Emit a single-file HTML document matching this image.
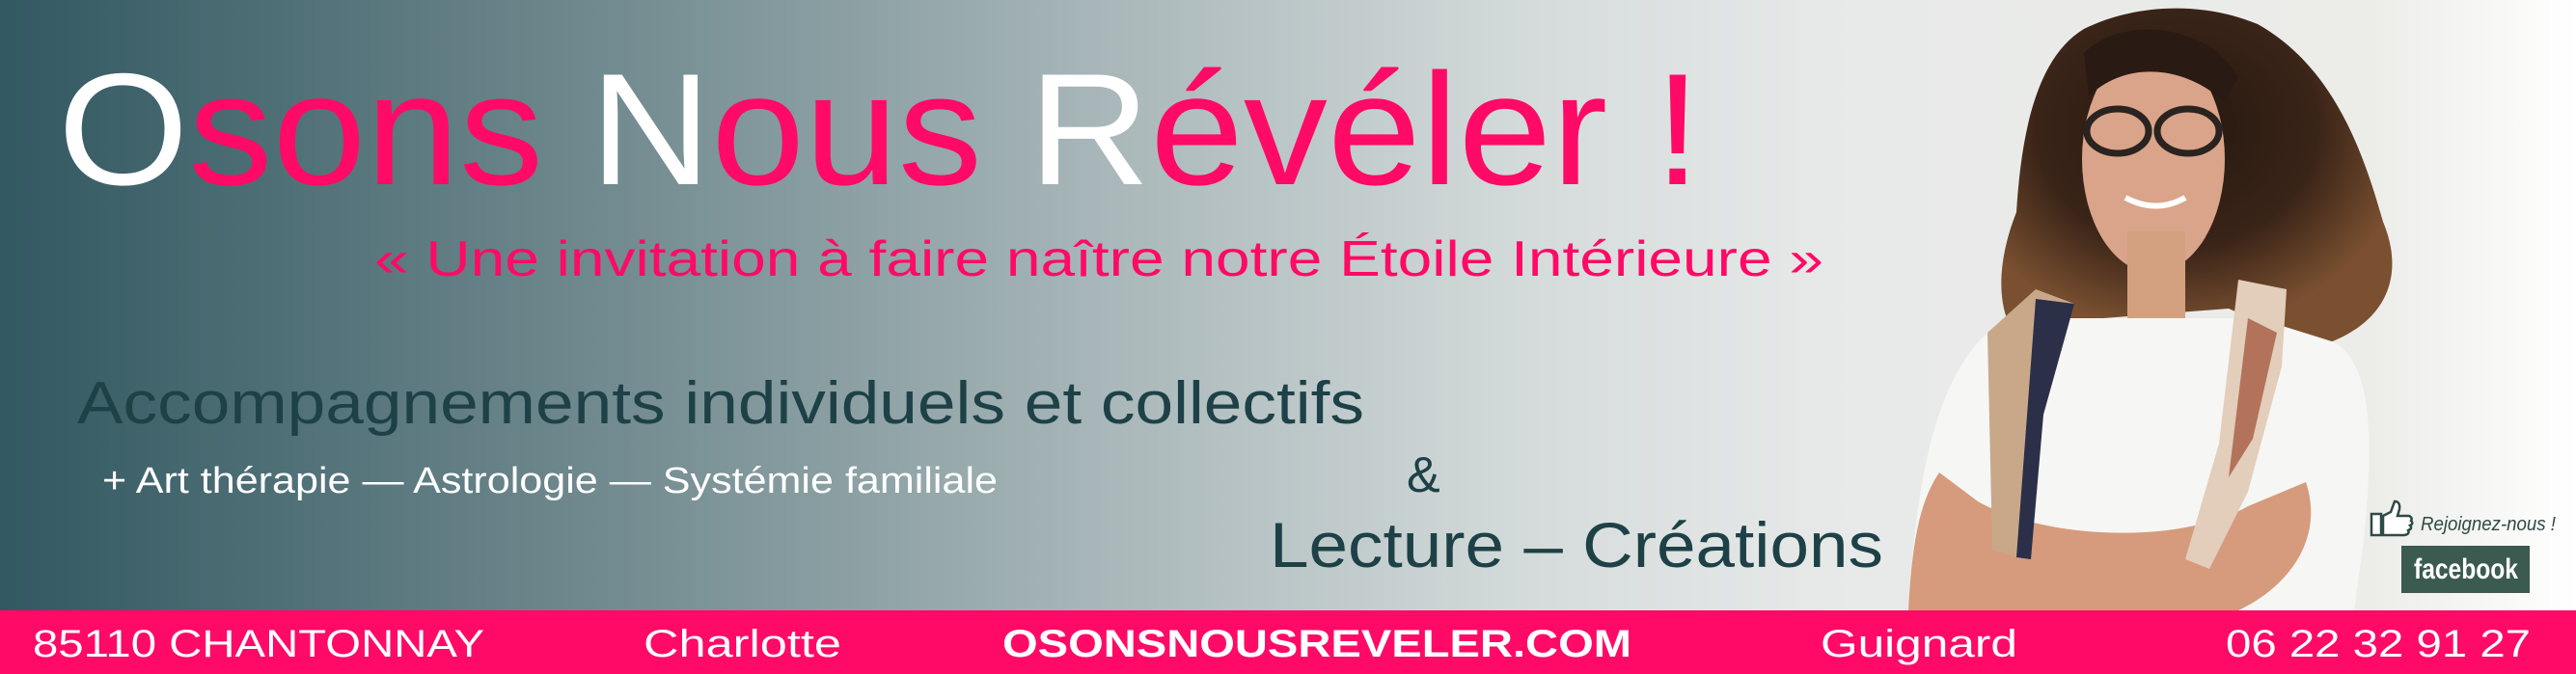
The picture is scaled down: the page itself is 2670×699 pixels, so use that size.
<!DOCTYPE html>
<html><head><meta charset="utf-8"><style>
html,body{margin:0;padding:0;width:2670px;height:699px;overflow:hidden}
svg{display:block}
text{font-family:"Liberation Sans",sans-serif}
</style></head><body>
<svg width="2670" height="699" viewBox="0 0 2670 699" xmlns="http://www.w3.org/2000/svg">
<defs>
<linearGradient id="bg" x1="0" y1="0" x2="1" y2="0">
<stop offset="0" stop-color="#325861"/>
<stop offset="0.22" stop-color="#6d878c"/>
<stop offset="0.42" stop-color="#a6b5b7"/>
<stop offset="0.6" stop-color="#d6dcdc"/>
<stop offset="0.72" stop-color="#e8eae9"/>
<stop offset="0.92" stop-color="#ecece9"/>
<stop offset="1" stop-color="#ffffff"/>
</linearGradient>
<radialGradient id="hair" cx="0.45" cy="0.35" r="0.6">
<stop offset="0" stop-color="#24170f"/>
<stop offset="0.6" stop-color="#3a2418"/>
<stop offset="1" stop-color="#7a5030"/>
</radialGradient>
</defs>
<rect width="2670" height="699" fill="url(#bg)"/>

<!-- person -->
<path d="M2160 30 C2110 60 2095 140 2090 220 C2070 270 2065 330 2100 360 L2180 330 L2310 320 L2400 360 C2470 340 2495 290 2470 230 C2450 160 2420 70 2340 25 C2280 0 2210 5 2160 30Z" fill="url(#hair)"/>
<ellipse cx="2232" cy="165" rx="74" ry="118" fill="#d9a489"/>
<path d="M2160 55 C2200 15 2290 25 2320 80 L2305 105 C2260 65 2200 65 2165 100Z" fill="#2a1a14"/>
<rect x="2205" y="240" width="60" height="100" fill="#d3a080"/>
<path d="M1978 633 C1985 520 2000 400 2060 345 L2140 330 L2340 330 L2420 355 C2460 380 2460 460 2450 560 L2440 633Z" fill="#f6f6f4"/>
<path d="M1978 633 C1982 560 1990 520 2010 490 L2050 520 C2120 560 2260 565 2330 525 L2390 500 C2410 560 2370 610 2320 633Z" fill="#d59b7c"/>
<path d="M2060 345 L2110 300 L2150 315 L2110 400 L2095 580 L2065 570 Z" fill="#c9a88a"/>
<path d="M2110 310 L2150 315 L2118 430 L2105 580 L2090 578 Z" fill="#2b2f48"/>
<path d="M2320 290 L2370 300 L2365 380 L2330 510 L2290 590 L2265 580 L2300 460 Z" fill="#e3cdbb"/>
<path d="M2330 330 L2360 345 L2335 455 L2310 495 Z" fill="#b2735a"/>
<ellipse cx="2195" cy="136" rx="32" ry="23" fill="none" stroke="#2a2320" stroke-width="7"/>
<ellipse cx="2268" cy="136" rx="32" ry="23" fill="none" stroke="#2a2320" stroke-width="7"/>
<path d="M2203 205 Q2235 222 2265 205" fill="none" stroke="#fff" stroke-width="6"/>

<!-- title -->
<text x="60" y="191" font-size="165" textLength="1703" lengthAdjust="spacingAndGlyphs" fill="#ff0a66"><tspan fill="#fff">O</tspan>sons <tspan fill="#fff">N</tspan>ous <tspan fill="#fff">R</tspan>évéler !</text>
<text x="388" y="286" font-size="52" textLength="1502" lengthAdjust="spacingAndGlyphs" fill="#ff0a66">« Une invitation à faire naître notre Étoile Intérieure »</text>
<text x="80" y="439" font-size="62" textLength="1334" lengthAdjust="spacingAndGlyphs" fill="#1d4146">Accompagnements individuels et collectifs</text>
<text x="106" y="511" font-size="38" textLength="928" lengthAdjust="spacingAndGlyphs" fill="#fff">+ Art thérapie — Astrologie — Systémie familiale</text>
<text x="1458" y="510" font-size="52" fill="#1d4146">&amp;</text>
<text x="1316" y="588" font-size="66" textLength="636" lengthAdjust="spacingAndGlyphs" fill="#1d4146">Lecture – Créations</text>

<!-- facebook -->
<path d="M2458 533 h10 v22 h-10z M2470 535 l8 -4 l4 -11 q6 0 5 8 l-2 7 h12 q4 2 2 5 q3 3 -1 5 q3 3 -2 5 q2 4 -4 5 h-22z" fill="#fff" stroke="#2f4a44" stroke-width="2.5"/>
<text x="2509" y="550" font-size="20" textLength="140" lengthAdjust="spacingAndGlyphs" fill="#2f4a44" font-style="italic">Rejoignez-nous !</text>
<rect x="2489" y="566" width="133" height="49" fill="#3b5a50"/>
<text x="2502" y="600" font-size="30" font-weight="bold" textLength="108" lengthAdjust="spacingAndGlyphs" fill="#fff">facebook</text>

<!-- bottom bar -->
<rect x="0" y="633" width="2670" height="66" fill="#ff0a66"/>
<g fill="#fff" font-size="40">
<text x="34" y="681" textLength="468" lengthAdjust="spacingAndGlyphs">85110 CHANTONNAY</text>
<text x="667" y="681" textLength="205" lengthAdjust="spacingAndGlyphs">Charlotte</text>
<text x="1039" y="681" font-weight="bold" textLength="652" lengthAdjust="spacingAndGlyphs">OSONSNOUSREVELER.COM</text>
<text x="1887" y="681" textLength="204" lengthAdjust="spacingAndGlyphs">Guignard</text>
<text x="2307" y="681" textLength="316" lengthAdjust="spacingAndGlyphs">06 22 32 91 27</text>
</g>
</svg>
</body></html>
